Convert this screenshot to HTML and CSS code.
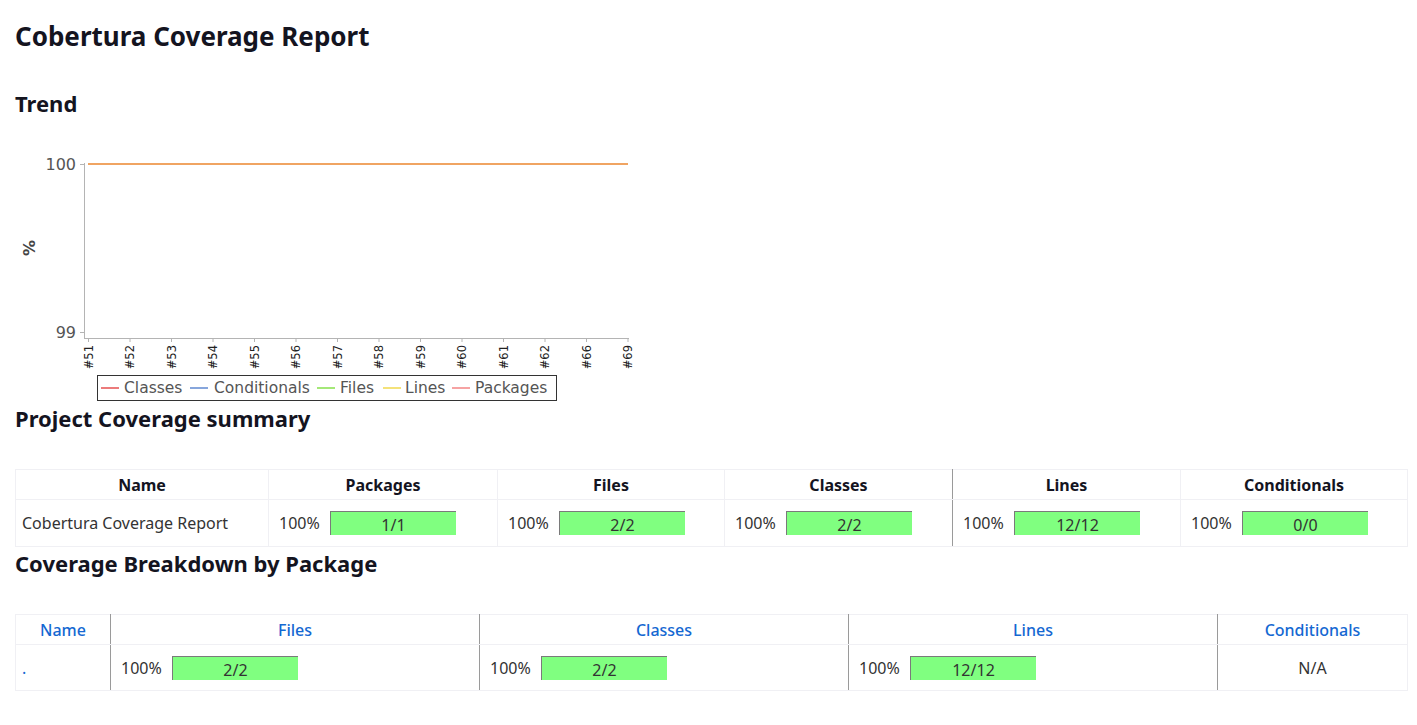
FILE: index.html
```html
<!DOCTYPE html>
<html>
<head>
<meta charset="utf-8">
<title>Cobertura Coverage Report</title>
<link rel="stylesheet" href="styles.css">
</head>
<body>
<main class="page">
  <h1 class="title">Cobertura Coverage Report</h1>
  <h2 class="section trend-title">Trend</h2>
  <svg class="chart" width="640" height="275" viewBox="0 0 640 275" xmlns="http://www.w3.org/2000/svg">
    <g class="axis">
      <line x1="69.5" y1="33" x2="69.5" y2="208" />
      <line x1="65" y1="34.5" x2="69" y2="34.5" />
      <line x1="65" y1="202.5" x2="69" y2="202.5" />
      <line x1="69" y1="208.5" x2="614" y2="208.5" />
    </g>
    <g class="axis ticks">
      <line x1="73.5" y1="208" x2="73.5" y2="212" />
      <line x1="115" y1="208" x2="115" y2="212" />
      <line x1="156.5" y1="208" x2="156.5" y2="212" />
      <line x1="198" y1="208" x2="198" y2="212" />
      <line x1="239.5" y1="208" x2="239.5" y2="212" />
      <line x1="281" y1="208" x2="281" y2="212" />
      <line x1="322.5" y1="208" x2="322.5" y2="212" />
      <line x1="364" y1="208" x2="364" y2="212" />
      <line x1="405.5" y1="208" x2="405.5" y2="212" />
      <line x1="447" y1="208" x2="447" y2="212" />
      <line x1="488.5" y1="208" x2="488.5" y2="212" />
      <line x1="530" y1="208" x2="530" y2="212" />
      <line x1="571.5" y1="208" x2="571.5" y2="212" />
      <line x1="613" y1="208" x2="613" y2="212" />
    </g>
    <text class="ylabel" x="61" y="40">100</text>
    <text class="ylabel" x="61" y="208">99</text>
    <text class="yname" transform="translate(20,118) rotate(-90)">%</text>
    <line class="series" x1="73" y1="34" x2="613" y2="34" />
    <g class="xlabels">
      <text transform="translate(77.5,215) rotate(-90)">#51</text>
      <text transform="translate(119,215) rotate(-90)">#52</text>
      <text transform="translate(160.5,215) rotate(-90)">#53</text>
      <text transform="translate(202,215) rotate(-90)">#54</text>
      <text transform="translate(243.5,215) rotate(-90)">#55</text>
      <text transform="translate(285,215) rotate(-90)">#56</text>
      <text transform="translate(326.5,215) rotate(-90)">#57</text>
      <text transform="translate(368,215) rotate(-90)">#58</text>
      <text transform="translate(409.5,215) rotate(-90)">#59</text>
      <text transform="translate(451,215) rotate(-90)">#60</text>
      <text transform="translate(492.5,215) rotate(-90)">#61</text>
      <text transform="translate(534,215) rotate(-90)">#62</text>
      <text transform="translate(575.5,215) rotate(-90)">#66</text>
      <text transform="translate(617,215) rotate(-90)">#69</text>
    </g>
    <rect class="legend-box" x="82.5" y="245.5" width="459" height="25" />
    <g class="legend">
      <line class="sw-classes" x1="86" y1="258" x2="104" y2="258" />
      <text x="109" y="263">Classes</text>
      <line class="sw-cond" x1="175" y1="258" x2="193" y2="258" />
      <text x="199" y="263">Conditionals</text>
      <line class="sw-files" x1="302" y1="258" x2="320" y2="258" />
      <text x="325" y="263">Files</text>
      <line class="sw-lines" x1="368" y1="258" x2="386" y2="258" />
      <text x="390" y="263">Lines</text>
      <line class="sw-pkg" x1="437" y1="258" x2="455" y2="258" />
      <text x="460" y="263">Packages</text>
    </g>
  </svg>

  <h2 class="section summary-title">Project Coverage summary</h2>
  <table class="grid summary">
    <thead>
      <tr>
        <th class="c-name">Name</th>
        <th class="c-pk">Packages</th>
        <th class="c-files">Files</th>
        <th class="c-m dark-right">Classes</th>
        <th class="c-m">Lines</th>
        <th>Conditionals</th>
      </tr>
    </thead>
    <tbody>
      <tr>
        <td class="name-cell">Cobertura Coverage Report</td>
        <td><div class="metric"><span class="pct">100%</span><div class="bar"><span>1/1</span></div></div></td>
        <td><div class="metric"><span class="pct">100%</span><div class="bar"><span>2/2</span></div></div></td>
        <td class="dark-right"><div class="metric"><span class="pct">100%</span><div class="bar"><span>2/2</span></div></div></td>
        <td><div class="metric"><span class="pct">100%</span><div class="bar"><span>12/12</span></div></div></td>
        <td><div class="metric"><span class="pct">100%</span><div class="bar"><span>0/0</span></div></div></td>
      </tr>
    </tbody>
  </table>

  <h2 class="section breakdown-title">Coverage Breakdown by Package</h2>
  <table class="grid breakdown">
    <thead>
      <tr>
        <th class="b-name"><a href="#">Name</a></th>
        <th class="b-m"><a href="#">Files</a></th>
        <th class="b-m"><a href="#">Classes</a></th>
        <th class="b-m"><a href="#">Lines</a></th>
        <th><a href="#">Conditionals</a></th>
      </tr>
    </thead>
    <tbody>
      <tr>
        <td class="name-cell"><a href="#" class="pkg-link">.</a></td>
        <td><div class="metric"><span class="pct">100%</span><div class="bar"><span>2/2</span></div></div></td>
        <td><div class="metric"><span class="pct">100%</span><div class="bar"><span>2/2</span></div></div></td>
        <td><div class="metric"><span class="pct">100%</span><div class="bar"><span>12/12</span></div></div></td>
        <td class="na">N/A</td>
      </tr>
    </tbody>
  </table>
</main>
</body>
</html>
```

FILE: styles.css
```css
html, body {
  margin: 0;
  padding: 0;
  background: #fff;
}

body {
  font-family: "Segoe UI", "Noto Sans", "Open Sans", sans-serif;
  color: #14141f;
}

.page {
  padding: 20px 9px 20px 15px;
}

.title {
  margin: 0;
  font-size: 26px;
  line-height: 32px;
  font-weight: 700;
}

.section {
  margin: 0;
  font-size: 22px;
  line-height: 28px;
  font-weight: 700;
}

.trend-title {
  margin-top: 37px;
}

.chart {
  display: block;
  margin-top: 13px;
  font-family: "DejaVu Sans", sans-serif;
}

.axis line {
  stroke: #b4b4b4;
  stroke-width: 1;
}

.ylabel {
  font-size: 16px;
  fill: #555;
  text-anchor: end;
}

.yname {
  font-size: 16px;
  font-weight: 700;
  fill: #444;
  text-anchor: middle;
}

.series {
  stroke: #f0a462;
  stroke-width: 2;
}

.xlabels text {
  font-size: 11.5px;
  fill: #222;
  text-anchor: end;
}

.legend-box {
  fill: #fff;
  stroke: #333;
  stroke-width: 1;
}

.legend text {
  font-size: 15.5px;
  fill: #555;
}

.legend line {
  stroke-width: 2;
}

.sw-classes { stroke: #ec7b7b; }
.sw-cond { stroke: #87a6dc; }
.sw-files { stroke: #a4e878; }
.sw-lines { stroke: #f4e27a; }
.sw-pkg { stroke: #f6a3a3; }

.summary-title {
  margin-top: -1px;
}

.grid {
  width: 1393px;
  border-collapse: collapse;
  table-layout: fixed;
  font-size: 16px;
}

.grid th,
.grid td {
  border: 1px solid #f0f0f4;
  padding: 0 6px;
}

.grid th {
  height: 29px;
  font-weight: 700;
  text-align: center;
  color: #14141f;
}

.grid td {
  height: 46px;
  color: #333;
  vertical-align: middle;
}

.summary {
  margin-top: 37px;
}

.c-name { width: 240px; }
.c-pk { width: 216px; }
.c-files { width: 214px; }
.c-m { width: 215px; }

.summary .dark-right {
  border-right: 1px solid #9a9a9a;
}

.breakdown-title {
  margin-top: 2px;
}

.breakdown {
  margin-top: 37px;
}

.breakdown th {
  font-weight: 500;
}

.breakdown th a {
  color: #1468d2;
  text-decoration: none;
}

.breakdown td {
  height: 45px;
}

.b-name { width: 82px; }
.b-m { width: 356px; }

.breakdown th:not(:last-child),
.breakdown td:not(:last-child) {
  border-right: 1px solid #9a9a9a;
}

.pkg-link {
  color: #1468d2;
  text-decoration: none;
}

.metric {
  display: flex;
  align-items: center;
  padding-left: 4px;
}

.pct {
  width: 51px;
  flex: none;
  line-height: 20px;
}

.bar {
  width: 125px;
  height: 23px;
  background: #80ff80;
  border-top: 1px solid #7a7a7a;
  border-left: 1px solid #7a7a7a;
  display: flex;
  justify-content: center;
  align-items: flex-end;
  color: #333;
  line-height: 20px;
}

.na {
  text-align: center;
}
```
